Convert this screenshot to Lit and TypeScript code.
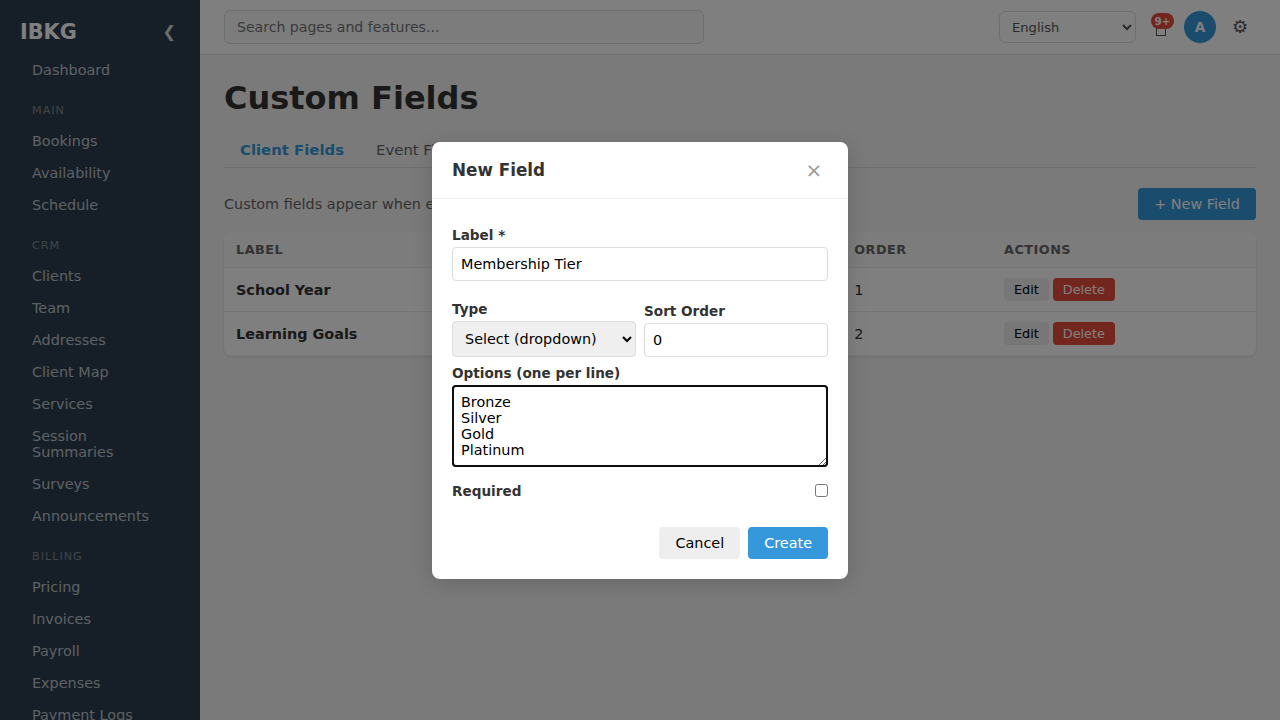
import { LitElement, html, css } from "lit";
import { customElement } from "lit/decorators.js";

const NAV: { title?: string; items: string[] }[] = [
  { items: ["Dashboard"] },
  { title: "Main", items: ["Bookings", "Availability", "Schedule"] },
  {
    title: "CRM",
    items: ["Clients", "Team", "Addresses", "Client Map", "Services", "Session Summaries", "Surveys", "Announcements"],
  },
  { title: "Billing", items: ["Pricing", "Invoices", "Payroll", "Expenses", "Payment Logs"] },
];

const FIELDS = [
  { label: "School Year", order: 1 },
  { label: "Learning Goals", order: 2 },
];

@customElement("app-sidebar")
class AppSidebar extends LitElement {
  static styles = css`
    :host { display: block; width: 200px; flex: none; background: #2c3e50; height: 720px; overflow: hidden; }
    .head { display: flex; align-items: center; justify-content: space-between; height: 54px; padding: 9px 24px 0 20px; box-sizing: border-box; }
    .brand { color: #fff; font-size: 20.8px; font-weight: 700; }
    .fold { color: #fff; opacity: 0.8; font-size: 16px; }
    .title { padding: 18px 32px 8px; font-size: 11.2px; letter-spacing: 1px; text-transform: uppercase; color: #7f8c8d; }
    .item { display: block; padding: 8px 32px; font-size: 14.4px; color: #bdc3c7; }
  `;
  render() {
    return html`
      <div class="head"><span class="brand">IBKG</span><span class="fold">❮</span></div>
      ${NAV.map(
        (g) => html`${g.title ? html`<div class="title">${g.title}</div>` : null}
        ${g.items.map((i) => html`<a class="item">${i}</a>`)}`
      )}
    `;
  }
}

@customElement("app-topbar")
class AppTopbar extends LitElement {
  static styles = css`
    :host { display: flex; align-items: center; justify-content: space-between; height: 55px; box-sizing: border-box; padding: 0 24px; background: #fff; border-bottom: 1px solid #ddd; }
    * { font-family: inherit; box-sizing: border-box; }
    .search { width: 480px; height: 34px; border: 1px solid #ddd; border-radius: 6px; padding: 8px 12px; font-size: 14.08px; background: #f8f9fa; }
    .search::placeholder { color: #757575; }
    .right { display: flex; align-items: center; }
    .lang { width: 137px; height: 32px; border: 1px solid #ddd; border-radius: 6px; padding: 0 8px; font-size: 13.12px; background: #fff; color: #555; }
    .bell { position: relative; width: 32px; height: 32px; margin: 0 8px; display: flex; align-items: center; justify-content: center; }
    .glyph { width: 10px; height: 13px; margin-top: 5px; margin-left: 2px; border: 1px solid #555; }
    .badge { position: absolute; left: 7px; top: 2px; height: 16px; width: 23px; border-radius: 8px; background: #e74c3c; color: #fff; font-size: 10.4px; font-weight: 700; line-height: 16px; text-align: center; }
    .avatar { width: 32px; height: 32px; border-radius: 50%; background: #3498db; color: #fff; font-size: 13.6px; font-weight: 700; display: flex; align-items: center; justify-content: center; }
    .gear { width: 32px; margin: -1px 0 0 8px; text-align: center; font-size: 18px; line-height: 20px; color: #555; }
  `;
  render() {
    return html`
      <input class="search" placeholder="Search pages and features..." />
      <div class="right">
        <select class="lang"><option>English</option></select>
        <div class="bell"><span class="glyph"></span><span class="badge">9+</span></div>
        <div class="avatar">A</div>
        <div class="gear">⚙</div>
      </div>
    `;
  }
}

@customElement("fields-page")
class FieldsPage extends LitElement {
  static styles = css`
    :host { display: block; padding: 24px; color: #333; }
    h1 { margin: 0; font-size: 32px; line-height: 39px; font-weight: 700; }
    .tabs { display: flex; margin-top: 14px; padding-top: 7px; height: 36px; box-sizing: border-box; border-bottom: 1px solid #ddd; font-size: 14.88px; color: #666; }
    .tab { padding: 2px 16px 0; }
    .tab.active { color: #3498db; font-weight: 600; }
    .bar { display: flex; align-items: center; justify-content: space-between; margin: 20px 0 12px; font-size: 14.4px; color: #666; }
    button { font-family: inherit; border: 0; border-radius: 4px; }
    .new { background: #3498db; color: #fff; font-size: 14.4px; height: 32px; padding: 0 16px; }
    .table { width: 100%; table-layout: fixed; border-spacing: 0; background: #fff; border-radius: 8px; overflow: hidden; box-shadow: 0 1px 3px rgba(0, 0, 0, 0.1); font-size: 14.4px; }
    th { height: 36px; box-sizing: border-box; padding: 0 12px; text-align: left; font-size: 12.8px; letter-spacing: 0.5px; text-transform: uppercase; color: #666; background: #f8f9fa; border-bottom: 1px solid #eee; }
    td { height: 44px; box-sizing: border-box; padding: 0 12px; border-bottom: 1px solid #eee; }
    .label { width: 618.2px; box-sizing: border-box; }
    .order { width: 149.8px; box-sizing: border-box; }
    .name { font-weight: 600; }
    .acts { display: flex; gap: 4px; }
    .small { font-size: 12.8px; height: 23px; padding: 0 10px; }
    .edit { background: #eee; color: #000; }
    .del { background: #e74c3c; color: #fff; }
  `;
  render() {
    return html`
      <h1>Custom Fields</h1>
      <div class="tabs"><span class="tab active">Client Fields</span><span class="tab">Event Fields</span></div>
      <div class="bar"><span>Custom fields appear when editing a client.</span><button class="new">+ New Field</button></div>
      <table class="table">
        <tr><th class="label">Label</th><th class="order">Order</th><th>Actions</th></tr>
        ${FIELDS.map(
          (f) => html`<tr>
            <td class="name">${f.label}</td>
            <td>${f.order}</td>
            <td><div class="acts"><button class="small edit">Edit</button><button class="small del">Delete</button></div></td>
          </tr>`
        )}
      </table>
    `;
  }
}

@customElement("field-dialog")
class FieldDialog extends LitElement {
  static styles = css`
    :host { position: absolute; inset: 0; display: flex; align-items: center; justify-content: center; background: rgba(0, 0, 0, 0.5); color: #333; }
    * { box-sizing: border-box; font-family: inherit; }
    .card { width: 416px; height: 437px; margin-top: 1px; background: #fff; border-radius: 8px; box-shadow: 0 4px 20px rgba(0, 0, 0, 0.15); }
    .head { display: flex; align-items: center; justify-content: space-between; height: 57px; padding: 0 20px; border-bottom: 1px solid #eee; }
    .title { font-size: 16.8px; font-weight: 700; }
    .close { width: 28px; text-align: center; font-size: 20px; line-height: 28px; color: #999; }
    .body { padding: 28px 20px 20px; display: flex; flex-direction: column; }
    .lbl { display: block; font-size: 13.6px; font-weight: 600; line-height: 16px; margin-bottom: 4px; }
    .inp { display: block; width: 100%; height: 34px; border: 1px solid #ddd; border-radius: 4px; padding: 8px; font-size: 14.4px; color: #000; background: #fff; }
    .sel { height: 36px; background: #efefef; }
    .row { display: flex; gap: 8px; align-items: flex-end; margin-top: 20px; }
    .half { flex: 1; }
    .opts { margin-top: 8px; }
    .area { display: block; width: 100%; height: 82px; border: 1px solid #101010; border-radius: 4px; padding: 8px; font-size: 14.4px; color: #000; resize: vertical; outline: 2px solid #101010; outline-offset: -2px; }
    .req { display: flex; align-items: flex-start; justify-content: space-between; height: 16px; margin-top: 16px; }
    .req .lbl { margin: 0; }
    .check { margin: 1px 0 0; width: 13px; height: 13px; }
    .foot { display: flex; justify-content: flex-end; gap: 8px; margin-top: 28px; }
    .btn { border: 0; border-radius: 4px; height: 32px; padding: 0 16px; font-size: 14.4px; color: #000; background: #eee; }
    .btn.primary { color: #fff; background: #3498db; }
  `;
  render() {
    return html`
      <div class="card">
        <div class="head"><span class="title">New Field</span><span class="close">×</span></div>
        <div class="body">
          <div><span class="lbl">Label *</span><input class="inp" .value=${"Membership Tier"} /></div>
          <div class="row">
            <div class="half"><span class="lbl">Type</span><select class="inp sel"><option>Select (dropdown)</option></select></div>
            <div class="half"><span class="lbl">Sort Order</span><input class="inp" type="number" .value=${"0"} /></div>
          </div>
          <div class="opts"><span class="lbl">Options (one per line)</span><textarea class="area" .value=${"Bronze\nSilver\nGold\nPlatinum"}></textarea></div>
          <div class="req"><span class="lbl">Required</span><input class="check" type="checkbox" /></div>
          <div class="foot"><button class="btn">Cancel</button><button class="btn primary">Create</button></div>
        </div>
      </div>
    `;
  }
}

@customElement("app-root")
class AppRoot extends LitElement {
  static styles = css`
    :host { position: relative; display: flex; width: 1280px; height: 720px; overflow: hidden; background: #f5f5f5; font-family: "DejaVu Sans", sans-serif; }
    .main { flex: 1; min-width: 0; }
  `;
  render() {
    return html`
      <app-sidebar></app-sidebar>
      <div class="main"><app-topbar></app-topbar><fields-page></fields-page></div>
      <field-dialog></field-dialog>
    `;
  }
}
